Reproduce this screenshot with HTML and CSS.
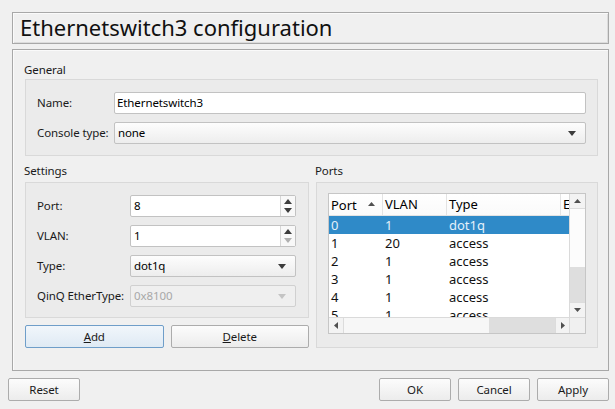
FILE: index.html
```html
<!DOCTYPE html>
<html>
<head>
<meta charset="utf-8">
<link rel="stylesheet" href="styles.css">
</head>
<body>
<div class="dialog">
  <div class="title">Ethernetswitch3 configuration</div>
  <div class="main">
    <div class="group-label">General</div>
    <div class="group general">
      <div class="form general-form">
        <span class="lbl">Name:</span>
        <div class="input">Ethernetswitch3</div>
        <span class="lbl">Console type:</span>
        <div class="combo"><span>none</span><svg class="dd" width="8" height="5" viewBox="0 0 8 5"><polygon points="0,0 8,0 4,5" /></svg></div>
      </div>
    </div>
    <div class="columns">
      <div class="col settings">
        <div class="group-label">Settings</div>
        <div class="group settings-group">
          <div class="form settings-form">
            <span class="lbl">Port:</span>
            <div class="spin"><span class="val">8</span><span class="arrows"><svg width="8" height="5" viewBox="0 0 8 5"><polygon points="0,5 8,5 4,0"/></svg><svg width="8" height="5" viewBox="0 0 8 5"><polygon points="0,0 8,0 4,5"/></svg></span></div>
            <span class="lbl">VLAN:</span>
            <div class="spin"><span class="val">1</span><span class="arrows"><svg width="8" height="5" viewBox="0 0 8 5"><polygon points="0,5 8,5 4,0"/></svg><svg class="off" width="8" height="5" viewBox="0 0 8 5"><polygon points="0,0 8,0 4,5"/></svg></span></div>
            <span class="lbl">Type:</span>
            <div class="combo"><span>dot1q</span><svg class="dd" width="8" height="5" viewBox="0 0 8 5"><polygon points="0,0 8,0 4,5" /></svg></div>
            <span class="lbl">QinQ EtherType:</span>
            <div class="combo disabled"><span>0x8100</span><svg class="dd" width="8" height="5" viewBox="0 0 8 5"><polygon points="0,0 8,0 4,5" /></svg></div>
          </div>
        </div>
        <div class="btn-row">
          <button class="btn default"><u>A</u>dd</button>
          <button class="btn"><u>D</u>elete</button>
        </div>
      </div>
      <div class="col ports">
        <div class="group-label">Ports</div>
        <div class="group ports-group">
          <div class="table">
            <div class="viewport">
              <div class="hdr">
                <div class="c c1 sort"><span>Port</span><svg width="7" height="4" viewBox="0 0 7 4"><polygon points="0,4 7,4 3.5,0"/></svg></div>
                <div class="c c2">VLAN</div>
                <div class="c c3">Type</div>
                <div class="c c4">EtherType</div>
              </div>
              <div class="row sel"><div class="c c1">0</div><div class="c c2">1</div><div class="c c3">dot1q</div><div class="c c4"></div></div>
              <div class="row"><div class="c c1">1</div><div class="c c2">20</div><div class="c c3">access</div><div class="c c4"></div></div>
              <div class="row"><div class="c c1">2</div><div class="c c2">1</div><div class="c c3">access</div><div class="c c4"></div></div>
              <div class="row"><div class="c c1">3</div><div class="c c2">1</div><div class="c c3">access</div><div class="c c4"></div></div>
              <div class="row"><div class="c c1">4</div><div class="c c2">1</div><div class="c c3">access</div><div class="c c4"></div></div>
              <div class="row"><div class="c c1">5</div><div class="c c2">1</div><div class="c c3">access</div><div class="c c4"></div></div>
            </div>
            <div class="vscroll">
              <div class="sbtn vbtn"><svg width="7" height="4" viewBox="0 0 7 4"><polygon points="0,4 7,4 3.5,0"/></svg></div>
              <div class="vtrack"></div>
              <div class="vhandle"></div>
              <div class="sbtn vbtn bottom"><svg width="7" height="4" viewBox="0 0 7 4"><polygon points="0,0 7,0 3.5,4"/></svg></div>
            </div>
            <div class="hscroll">
              <div class="sbtn hbtn"><svg width="4" height="7" viewBox="0 0 4 7"><polygon points="4,0 4,7 0,3.5"/></svg></div>
              <div class="htrack"></div>
              <div class="hhandle"></div>
              <div class="sbtn hbtn right"><svg width="4" height="7" viewBox="0 0 4 7"><polygon points="0,0 0,7 4,3.5"/></svg></div>
            </div>
            <div class="corner"></div>
          </div>
        </div>
      </div>
    </div>
  </div>
  <div class="footer">
    <button class="btn fbtn">Reset</button>
    <span class="spacer"></span>
    <button class="btn fbtn">OK</button>
    <button class="btn fbtn">Cancel</button>
    <button class="btn fbtn">Apply</button>
  </div>
</div>
</body>
</html>
```

FILE: styles.css
```css
* { box-sizing: border-box; }
html, body {
  margin: 0;
  padding: 0;
  background: #f0f0f0;
  width: 615px;
  height: 409px;
  overflow: hidden;
}
body {
  font-family: "Noto Sans", "Open Sans", sans-serif;
  font-size: 11.5px;
  letter-spacing: -0.1px;
  color: #000;
}
.dialog {
  padding-top: 12px;
}
.title {
  margin: 0 6px 0 12px;
  height: 32px;
  border: 1px solid #a8a8a8;
  box-shadow: inset 1px 1px 0 #fafafa, inset -1px -1px 0 #dcdcdc;
  font-size: 22px;
  letter-spacing: 0;
  line-height: 29px;
  padding-left: 7px;
  color: #111;
}
.main {
  margin: 5px 6px 0 12px;
  border: 1px solid #a8a8a8;
  box-shadow: inset 1px 1px 0 #fafafa;
  padding: 12px 10px 22px 12px;
}
.group-label {
  height: 16px;
  line-height: 16px;
  margin: 0 0 1px -1px;
  color: #1a1a1a;
}
.group {
  border: 1px solid #d9d9d9;
  background: #ebebeb;
}
.general {
  padding: 12px 11px 11px 11px;
}
.form {
  display: grid;
  row-gap: 8px;
  align-items: center;
}
.general-form {
  grid-template-columns: 77px 1fr;
}
.lbl {
  line-height: 16px;
  color: #1a1a1a;
  white-space: nowrap;
}
.input {
  height: 22px;
  border: 1px solid #c2c2c2;
  border-radius: 2px;
  background: #fff;
  padding-left: 2px;
  line-height: 20px;
}
.combo {
  height: 22px;
  border: 1px solid #c2c2c2;
  border-radius: 2px;
  background: linear-gradient(#fdfdfd, #ededed);
  padding: 0 9px 0 3px;
  display: flex;
  align-items: center;
  justify-content: space-between;
  line-height: 20px;
}
.combo .dd { fill: #3c3c3c; }
.combo.disabled {
  background: #efefef;
  border-color: #d0d0d0;
  color: #a8a8a8;
}
.combo.disabled .dd { fill: #c4c4c4; }
.columns {
  display: flex;
  gap: 7px;
  margin-top: 7px;
}
.col {
  display: flex;
  flex-direction: column;
}
.settings { width: 284px; }
.ports { flex: 1; }
.columns .group-label + .group { margin-top: 2px; }
.settings-group {
  padding: 12px 11px 10px 11px;
}
.settings-form {
  grid-template-columns: 93px 166px;
}
.spin {
  height: 22px;
  border: 1px solid #c2c2c2;
  border-radius: 2px;
  background: #fff;
  display: flex;
  align-items: stretch;
}
.spin .val {
  flex: 1;
  padding-left: 3px;
  line-height: 20px;
}
.spin .arrows {
  width: 15px;
  border-left: 1px solid #d6d6d6;
  display: flex;
  flex-direction: column;
  align-items: center;
  justify-content: center;
  gap: 4px;
  background: #f8f8f8;
}
.spin .arrows svg { fill: #3c3c3c; display: block; }
.spin .arrows svg.off { fill: #b0b0b0; }
.btn-row {
  display: flex;
  gap: 7px;
  margin-top: 7px;
}
.btn {
  font-family: inherit;
  font-size: 11.5px;
  letter-spacing: -0.1px;
  color: #1a1a1a;
  height: 23px;
  border: 1px solid #acacac;
  border-radius: 2px;
  background: linear-gradient(#fcfcfc, #ececec);
  padding: 0;
  margin: 0;
}
.btn-row .btn { flex: 1; }
.btn.default {
  border-color: #6f9ec9;
  background: linear-gradient(#f1f6fb, #dfeaf4);
}
.ports-group {
  flex: 1;
  padding: 10px 11px 11px 11px;
}
.table {
  width: 258px;
  height: 141px;
  border: 1px solid #c6c6c6;
  background: #fff;
  display: grid;
  grid-template-columns: 240px 16px;
  grid-template-rows: 123px 16px;
  font-size: 13px;
  letter-spacing: 0;
}
.viewport {
  overflow: hidden;
}
.hdr, .row {
  display: flex;
  white-space: nowrap;
}
.hdr {
  height: 22px;
  border-bottom: 1px solid #e3e3e3;
  background: linear-gradient(#ffffff, #fafafa);
  line-height: 20px;
}
.hdr .c {
  border-right: 1px solid #e3e3e3;
}
.c {
  flex: none;
  padding-left: 2px;
  overflow: hidden;
}
.c1 { width: 54px; }
.c2 { width: 64px; }
.c3 { width: 114px; }
.c4 { width: 90px; }
.sort {
  display: flex;
  align-items: center;
  justify-content: space-between;
  padding-right: 7px;
}
.sort svg { fill: #505050; margin-top: -2px; }
.row {
  height: 18px;
  line-height: 18px;
  color: #111;
}
.row.sel {
  background: #2f8ac8;
  color: #e4f0fa;
}
.vscroll {
  border-left: 1px solid #dadada;
  display: flex;
  flex-direction: column;
  background: #fcfcfc;
}
.sbtn {
  display: flex;
  align-items: center;
  justify-content: center;
  background: #f3f3f3;
}
.sbtn svg { fill: #505050; display: block; }
.vbtn {
  height: 15px;
  border-bottom: 1px solid #dcdcdc;
}
.vbtn.bottom {
  border-bottom: none;
  border-top: 1px solid #dcdcdc;
}
.vtrack { height: 58px; background: #fcfcfc; }
.vhandle { height: 35px; background: #dedede; }
.hscroll {
  border-top: 1px solid #dadada;
  display: flex;
  background: #fcfcfc;
}
.hbtn {
  width: 15px;
  border-right: 1px solid #dcdcdc;
}
.hbtn.right {
  width: 14px;
  border-right: none;
  border-left: 1px solid #dcdcdc;
}
.htrack { width: 145px; background: #f7f7f7; }
.hhandle { width: 66px; background: #dedede; }
.corner {
  background: #f0f0f0;
  border-left: 1px solid #dadada;
  border-top: 1px solid #dadada;
}
.footer {
  display: flex;
  gap: 7px;
  margin-top: 7px;
  padding: 0 6px 0 8px;
}
.spacer { flex: 1; }
.fbtn { width: 72px; }
```
